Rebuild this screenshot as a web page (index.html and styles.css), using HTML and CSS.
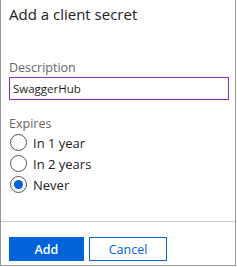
FILE: index.html
```html
<!DOCTYPE html>
<html lang="en">

<head>
    <meta charset="UTF-8">
    <title>Add a client secret</title>
    <link rel="stylesheet" href="styles.css">
</head>

<body>
    <div class="Panel">
        <div class="PanelBody">
            <h2 class="Title">Add a client secret</h2>
            <label class="FieldLabel" for="desc">Description</label>
            <input id="desc" class="TextBox" type="text" value="SwaggerHub">
            <div class="FieldLabel ExpLabel">Expires</div>
            <ul class="RadioList">
                <li class="RadioItem"><span class="Circle"></span>In 1 year</li>
                <li class="RadioItem"><span class="Circle"></span>In 2 years</li>
                <li class="RadioItem"><span class="Circle on"></span>Never</li>
            </ul>
        </div>
        <div class="PanelFoot">
            <button class="Btn BtnPrimary">Add</button>
            <button class="Btn BtnDefault">Cancel</button>
        </div>
    </div>
</body>

</html>
```

FILE: styles.css
```css
body {
    margin: 0;
    font-family: "Open Sans", "Noto Sans", sans-serif;
    color: #222;
}

.Panel {
    width: 234px;
    height: 265px;
    border: 1px solid #999;
    border-top: none;
    background: #fff;
    display: flex;
    flex-direction: column;
}

.PanelBody {
    flex: 1;
    padding: 4px 6px 0 8px;
    display: flex;
    flex-direction: column;
    align-items: flex-start;
}

.Title {
    margin: 0;
    font-size: 15px;
    font-weight: normal;
    line-height: 21px;
    color: #222;
}

.FieldLabel {
    font-size: 12.5px;
    line-height: 17px;
    color: #666;
}

label.FieldLabel {
    margin-top: 34px;
}

.TextBox {
    box-sizing: border-box;
    width: 220px;
    height: 23px;
    margin: 1px 0 0;
    padding: 0 0 0 3px;
    border: 1px solid #8b2dad;
    outline: none;
    font-family: inherit;
    font-size: 11.5px;
    color: #222;
}

.ExpLabel {
    margin-top: 15px;
}

.RadioList {
    list-style: none;
    margin: 0;
    padding: 0;
}

.RadioItem {
    display: flex;
    align-items: center;
    height: 21px;
    font-size: 13px;
    color: #222;
}

.Circle {
    box-sizing: border-box;
    width: 17px;
    height: 17px;
    margin: 0 6px 0 1px;
    border: 1px solid #555;
    border-radius: 50%;
    display: flex;
    align-items: center;
    justify-content: center;
}

.Circle.on::after {
    content: "";
    width: 9px;
    height: 9px;
    border-radius: 50%;
    background: #0063d9;
}

.PanelFoot {
    border-top: 1px solid #ccc;
    height: 44px;
    padding: 15px 0 0 8px;
    box-sizing: border-box;
    display: flex;
    gap: 5px;
}

.Btn {
    box-sizing: border-box;
    height: 24px;
    font-family: inherit;
    font-size: 12.5px;
    padding: 0;
    cursor: pointer;
}

.BtnPrimary {
    width: 75px;
    border: none;
    background: #0063d9;
    color: #fff;
    font-weight: 600;
}

.BtnDefault {
    width: 78px;
    border: 1px solid #0063d9;
    background: #fff;
    color: #0063d9;
}
```
